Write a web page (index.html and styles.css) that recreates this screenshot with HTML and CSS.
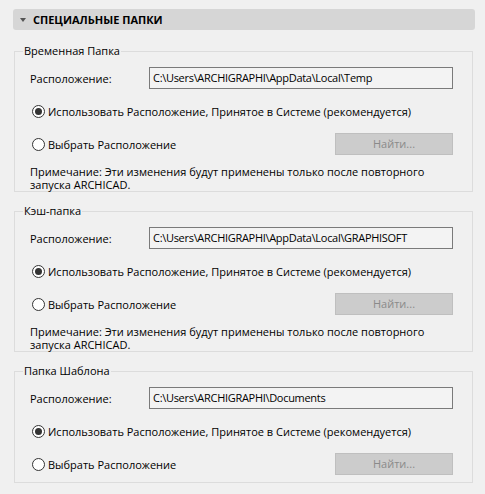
FILE: index.html
```html
<!DOCTYPE html>
<html lang="ru">
<head>
<meta charset="utf-8">
<title>Специальные папки</title>
<link rel="stylesheet" href="styles.css">
</head>
<body>
<div class="panel">
  <div class="section-header">
    <span class="caret"></span>
    <span class="section-title">СПЕЦИАЛЬНЫЕ ПАПКИ</span>
  </div>

  <div class="group">
    <div class="legend">Временная Папка</div>
    <div class="row field-row">
      <span class="label">Расположение:</span>
      <div class="field">C:\Users\ARCHIGRAPHI\AppData\Local\Temp</div>
    </div>
    <div class="row radio-row">
      <span class="radio checked"></span>
      <span class="radio-label">Использовать Расположение, Принятое в Системе (рекомендуется)</span>
    </div>
    <div class="row radio-row">
      <span class="radio"></span>
      <span class="radio-label">Выбрать Расположение</span>
      <div class="button">Найти...</div>
    </div>
    <p class="note">Примечание: Эти изменения будут применены только после повторного запуска ARCHICAD.</p>
  </div>

  <div class="group">
    <div class="legend">Кэш-папка</div>
    <div class="row field-row">
      <span class="label">Расположение:</span>
      <div class="field">C:\Users\ARCHIGRAPHI\AppData\Local\GRAPHISOFT</div>
    </div>
    <div class="row radio-row">
      <span class="radio checked"></span>
      <span class="radio-label">Использовать Расположение, Принятое в Системе (рекомендуется)</span>
    </div>
    <div class="row radio-row">
      <span class="radio"></span>
      <span class="radio-label">Выбрать Расположение</span>
      <div class="button">Найти...</div>
    </div>
    <p class="note">Примечание: Эти изменения будут применены только после повторного запуска ARCHICAD.</p>
  </div>

  <div class="group group-last">
    <div class="legend">Папка Шаблона</div>
    <div class="row field-row">
      <span class="label">Расположение:</span>
      <div class="field">C:\Users\ARCHIGRAPHI\Documents</div>
    </div>
    <div class="row radio-row">
      <span class="radio checked"></span>
      <span class="radio-label">Использовать Расположение, Принятое в Системе (рекомендуется)</span>
    </div>
    <div class="row radio-row">
      <span class="radio"></span>
      <span class="radio-label">Выбрать Расположение</span>
      <div class="button">Найти...</div>
    </div>
  </div>
</div>
</body>
</html>
```

FILE: styles.css
```css
html, body {
  margin: 0;
  padding: 0;
  background: #f0f0f0;
}

body {
  font-family: "Open Sans", "Noto Sans", sans-serif;
  font-size: 11px;
  color: #000;
}

.panel {
  padding: 9px 10px 0 13px;
  display: flex;
  flex-direction: column;
}

.section-header {
  height: 21px;
  background: #d6d6d6;
  border-radius: 3px;
  display: flex;
  align-items: center;
  padding-left: 7px;
  gap: 7px;
}

.caret {
  width: 0;
  height: 0;
  border-left: 3px solid transparent;
  border-right: 3px solid transparent;
  border-top: 4px solid #555;
}

.section-title {
  font-weight: 700;
  font-size: 11px;
  line-height: 21px;
}

.group {
  margin: 21px 2px 0 1px;
  border: 1px solid #dcdcdc;
  padding: 0 19px 0 15px;
  display: flex;
  flex-direction: column;
}

.group + .group {
  margin-top: 19px;
}

.group-last {
  padding-bottom: 7px;
}

.legend {
  align-self: flex-start;
  margin: -9px 0 0 -7px;
  padding: 0 1px;
  background: #f0f0f0;
  line-height: 16px;
  height: 16px;
}

.row {
  display: flex;
  align-items: center;
  height: 22px;
}

.field-row {
  margin-top: 8px;
}

.radio-row {
  margin-top: 11px;
}

.label {
  width: 119px;
  flex: none;
}

.field {
  flex: 1;
  height: 22px;
  box-sizing: border-box;
  border: 1px solid #7a7a7a;
  background: #f3f3f3;
  padding-left: 3px;
  line-height: 20px;
  white-space: nowrap;
  overflow: hidden;
  letter-spacing: -0.3px;
}

.radio {
  width: 13px;
  height: 13px;
  box-sizing: border-box;
  border: 1px solid #333;
  border-radius: 50%;
  background: #fff;
  margin-left: 2px;
  margin-right: 3px;
  flex: none;
  display: flex;
  align-items: center;
  justify-content: center;
}

.radio.checked::after {
  content: "";
  width: 7px;
  height: 7px;
  border-radius: 50%;
  background: #333;
}

.radio-label {
  white-space: nowrap;
}

.button {
  margin-left: auto;
  width: 118px;
  height: 22px;
  box-sizing: border-box;
  background: #cccccc;
  border: 1px solid #bfbfbf;
  color: #8a8a8a;
  text-align: center;
  line-height: 20px;
}

.note {
  margin: 10px 0 0 0;
  line-height: 13px;
  height: 26px;
}
```
